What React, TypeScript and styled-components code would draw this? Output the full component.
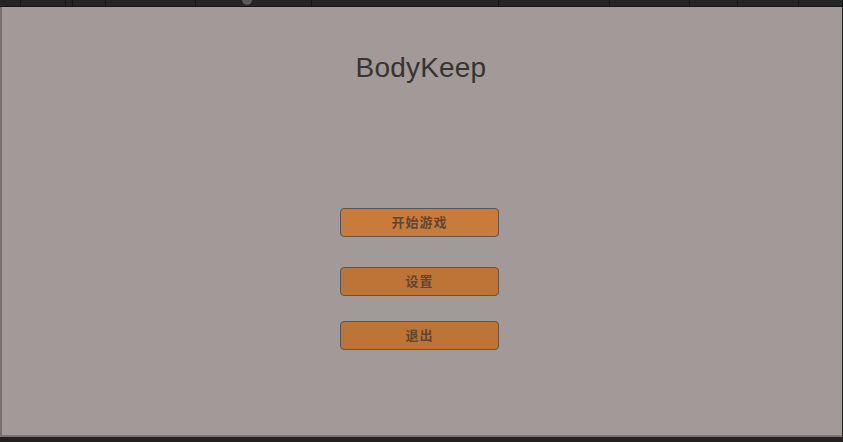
import React from "react";
import styled, { createGlobalStyle } from "styled-components";

const GlobalStyle = createGlobalStyle`
  html, body {
    margin: 0;
    padding: 0;
    background: #222222;
  }
`;

const Frame = styled.div`
  width: 843px;
  height: 442px;
  display: flex;
  flex-direction: column;
  background: #222222;
  overflow: hidden;
  font-family: "Liberation Sans", "Noto Sans CJK SC", sans-serif;
`;

const Toolbar = styled.div`
  height: 6px;
  flex-shrink: 0;
  display: flex;
  border-bottom: 1px solid #171717;
  background: #252525;
  overflow: hidden;
`;

const ToolCell = styled.div<{ $w: number }>`
  width: ${(p) => p.$w}px;
  border-right: 1px solid #161616;
  position: relative;
`;

const Knob = styled.div`
  position: absolute;
  left: 46px;
  top: -5px;
  width: 10px;
  height: 10px;
  border-radius: 50%;
  background: #5a5a5a;
`;

const GameView = styled.div`
  flex: 1;
  display: flex;
  flex-direction: column;
  align-items: center;
  background: #a19a98;
  border-left: 2px solid #77706e;
  border-bottom: 2px solid #7a7371;
  margin-right: 1px;
`;

const StatusBar = styled.div`
  height: 5px;
  flex-shrink: 0;
  background: #212121;
`;

const Title = styled.h1`
  margin: 45px 0 0;
  font-size: 28px;
  font-weight: normal;
  color: #363434;
  line-height: 32px;
  letter-spacing: 0.2px;
  transform: translateX(-1px);
`;

const Menu = styled.div`
  margin-top: 124px;
  margin-right: 5px;
  display: flex;
  flex-direction: column;
  align-items: center;
`;

const MenuButton = styled.button<{ $gap: number; $light?: boolean }>`
  margin-top: ${(p) => p.$gap}px;
  width: 159px;
  height: 29px;
  border: 1px solid #5e5450;
  border-radius: 4px;
  background: ${(p) => (p.$light ? "#c97b3b" : "#bd7537")};
  color: #604634;
  font-family: "Noto Sans CJK SC", sans-serif;
  font-size: 13px;
  font-weight: bold;
  letter-spacing: 1px;
  padding: 0 0 2px;
  cursor: pointer;
`;

const cells = [20, 45, 6, 32, 91, 116, 189, 112, 80, 48, 60, 44];

export default function App() {
  return (
    <>
      <GlobalStyle />
      <Frame>
        <Toolbar>
          {cells.map((w, i) => (
            <ToolCell key={i} $w={w}>
              {i === 5 && <Knob />}
            </ToolCell>
          ))}
        </Toolbar>
        <GameView>
          <Title>BodyKeep</Title>
          <Menu>
            <MenuButton $gap={0} $light>开始游戏</MenuButton>
            <MenuButton $gap={30}>设置</MenuButton>
            <MenuButton $gap={25}>退出</MenuButton>
          </Menu>
        </GameView>
        <StatusBar />
      </Frame>
    </>
  );
}
